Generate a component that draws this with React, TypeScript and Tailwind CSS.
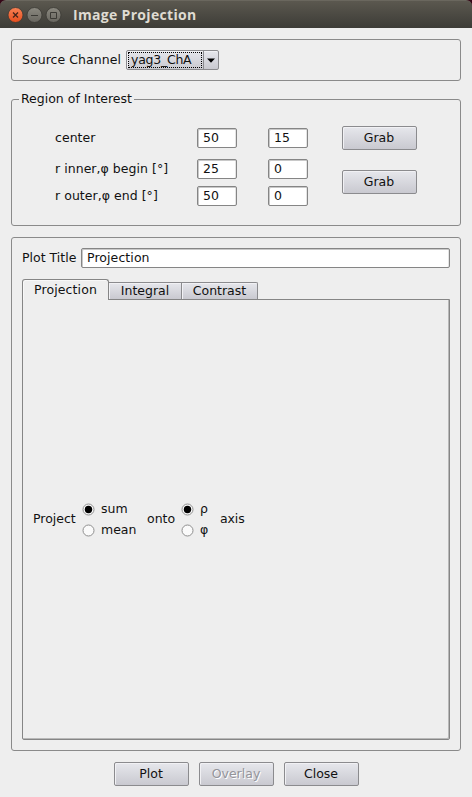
import type { ReactNode } from "react";

const buttonFace =
  "border border-[#8b8b8e] bg-linear-to-b from-[#e6e7ec] to-[#c9c9d0] shadow-[inset_1px_1px_0_#f1f1f4]";

function Button({ children, disabled = false }: { children: ReactNode; disabled?: boolean }) {
  return (
    <button
      disabled={disabled}
      className={`flex h-6 w-[75px] items-center justify-center rounded-[2px] pr-px pb-px ${buttonFace} ${
        disabled ? "text-[#94949a] [text-shadow:1px_1px_0_#ffffff]" : ""
      }`}
    >
      {children}
    </button>
  );
}

function Field({ value, className = "w-10" }: { value: string; className?: string }) {
  return (
    <input
      defaultValue={value}
      className={`h-5 rounded-[2px] border border-[#858585] bg-white pb-px pl-[5px] tracking-[0.08px] shadow-[inset_1px_1px_0_#c8c8c8,inset_-1px_0_0_#e4e4e4] outline-none ${className}`}
    />
  );
}

function Radio({ label, checked = false }: { label: string; checked?: boolean }) {
  return (
    <label className="flex h-[21px] items-center">
      <svg width="13" height="13" viewBox="0 0 13 13" className="shrink-0">
        <circle cx="6.5" cy="6.5" r="5.5" fill="#fafafa" stroke="#8f8f8f" />
        {checked && <circle cx="6.5" cy="6.5" r="3.7" fill="#000" />}
      </svg>
      <span className="pb-px pl-[6px]">{label}</span>
    </label>
  );
}

export default function App() {
  return (
    <div className="h-[797px] w-[472px] bg-[#350717] font-['DejaVu_Sans','Liberation_Sans',sans-serif] text-[12.5px] leading-[16px] text-[#111111]">
      <header className="flex h-7 items-center rounded-t-[6px] border-t border-[#6a675e] bg-linear-to-b from-[#5b584f] to-[#3d3c37] pl-[7px]">
        <svg width="56" height="18" viewBox="0 0 56 18" className="shrink-0">
          <defs>
            <linearGradient id="close" x2="0" y2="1">
              <stop stopColor="#f78255" />
              <stop offset="1" stopColor="#e64d1d" />
            </linearGradient>
            <linearGradient id="grey" x2="0" y2="1">
              <stop stopColor="#8b8980" />
              <stop offset="1" stopColor="#68665f" />
            </linearGradient>
          </defs>
          <circle cx="8.5" cy="9" r="7.5" fill="url(#close)" stroke="#3a3933" strokeWidth=".8" />
          <circle cx="27.5" cy="9" r="7.5" fill="url(#grey)" stroke="#3a3933" strokeWidth=".8" />
          <circle cx="46.5" cy="9" r="7.5" fill="url(#grey)" stroke="#3a3933" strokeWidth=".8" />
          <path d="M6 6.5l5 5m0-5l-5 5" stroke="#43241a" strokeWidth="1.3" />
          <path d="M24 9.5h7" stroke="#3b3a35" />
          <path d="M43.5 6.5h6v6h-6z" fill="none" stroke="#3b3a35" />
        </svg>
        <h1 className="pl-[10px] font-['Open_Sans','Noto_Sans',sans-serif] text-[14px] leading-[18px] font-bold tracking-[0.32px] text-[#dfdbd2]">
          Image Projection
        </h1>
      </header>

      <main className="flex h-[769px] flex-col bg-[#eeeeee] px-[11px] pt-[11px]">
        <section className="flex h-[42px] items-center rounded-[3px] border border-[#8a8a8a] pl-[10px]">
          <span className="w-[104px] pb-px tracking-[0.05px]">Source Channel</span>
          <div className={`flex h-5 w-[93px] rounded-[2px] ${buttonFace}`}>
            <div className="m-px flex w-[74px] items-center border border-dotted border-black pb-px pl-[2px] tracking-[-0.25px]">
              yag3_ChA
            </div>
            <div className="flex grow items-center justify-center border-l border-[#8b8b8e]">
              <svg width="8" height="5" viewBox="0 0 8 5">
                <path d="M0 .5h8L4 4.8z" fill="#000" />
              </svg>
            </div>
          </div>
        </section>

        <fieldset className="mt-[10px] h-[135px] rounded-[3px] border border-[#8a8a8a] pl-[7px]">
          <legend className="h-4 px-[2px]">Region of Interest</legend>
          <div className="flex pt-[21px] pl-9">
            <div className="w-[142px] tracking-[0.04px]">
              <div className="flex h-5 items-center pb-px">center</div>
              <div className="mt-[11px] flex h-5 items-center pb-px">r inner,φ begin [°]</div>
              <div className="mt-[7px] flex h-5 items-center pb-px">r outer,φ end [°]</div>
            </div>
            <div className="flex w-[71px] flex-col">
              <Field value="50" />
              <Field value="25" className="mt-[11px] w-10" />
              <Field value="50" className="mt-[7px] w-10" />
            </div>
            <div className="flex w-[74px] flex-col">
              <Field value="15" />
              <Field value="0" className="mt-[11px] w-10" />
              <Field value="0" className="mt-[7px] w-10" />
            </div>
            <div className="-mt-[2px] flex flex-col gap-5">
              <Button>Grab</Button>
              <Button>Grab</Button>
            </div>
          </div>
        </fieldset>

        <section className="mt-[11px] flex h-[514px] flex-col rounded-[3px] border border-[#8a8a8a] px-[10px] pt-[10px]">
          <div className="flex items-center">
            <span className="w-[59px] shrink-0 pb-px">Plot Title</span>
            <Field value="Projection" className="w-[369px]" />
          </div>
          <nav className="mt-[11px] flex h-5 items-end">
            <div className="z-10 -mb-px flex h-[21px] w-[87px] items-center justify-center rounded-t-[3px] border border-b-0 border-[#858585] bg-[#eeeeee] tracking-[0.1px] shadow-[inset_1px_1px_0_#f8f8f8]">
              Projection
            </div>
            <div className={`flex h-[17px] w-[73px] items-center justify-center border-b-0 border-l-0 ${buttonFace}`}>
              Integral
            </div>
            <div className={`flex h-[17px] w-[76px] items-center justify-center rounded-tr-[2px] border-b-0 border-l-0 ${buttonFace}`}>
              Contrast
            </div>
          </nav>
          <div className="flex h-[441px] w-[428px] items-center rounded-b-[2px] border border-[#858585] pl-[10px] shadow-[inset_-1px_-1px_0_#b8b8b8]">
            <span className="w-[49px] pb-[2px]">Project</span>
            <div className="w-[65px]">
              <Radio label="sum" checked />
              <Radio label="mean" />
            </div>
            <span className="w-[34px] pb-[2px]">onto</span>
            <div className="w-[39px]">
              <Radio label="ρ" checked />
              <Radio label="φ" />
            </div>
            <span className="pb-[2px] tracking-[-0.1px]">axis</span>
          </div>
        </section>

        <footer className="mt-[11px] flex gap-[10px] pl-[103px]">
          <Button>Plot</Button>
          <Button disabled>Overlay</Button>
          <Button>Close</Button>
        </footer>
      </main>
    </div>
  );
}
